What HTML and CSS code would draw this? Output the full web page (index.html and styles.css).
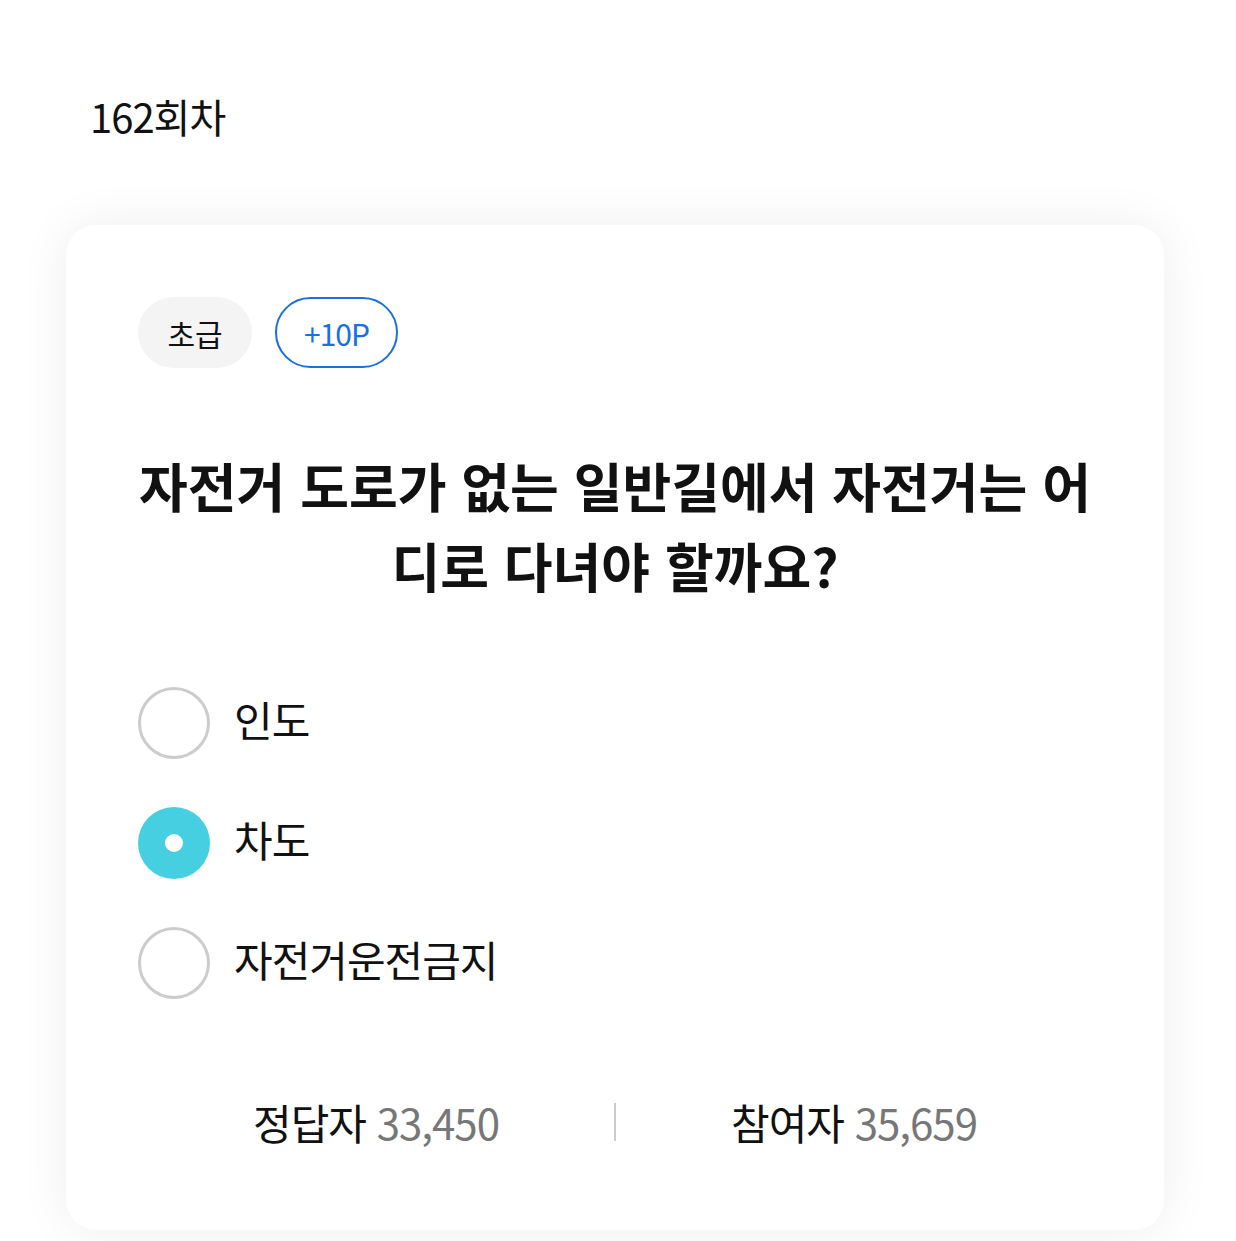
FILE: index.html
```html
<!DOCTYPE html>
<html lang="ko">

<head>
    <meta charset="utf-8">
    <title>퀴즈</title>
    <link rel="stylesheet" href="styles.css">
</head>

<body>
    <div class="page">
        <h2 class="round">162회차</h2>

        <div class="quiz-card">
            <div class="tags">
                <span class="tag tag-level">초급</span>
                <span class="tag tag-point">+10P</span>
            </div>

            <h1 class="question">자전거 도로가 없는 일반길에서 자전거는 어디로 다녀야 할까요?</h1>

            <ul class="options">
                <li class="option">
                    <span class="radio"></span>
                    <span class="option-text">인도</span>
                </li>
                <li class="option selected">
                    <span class="radio"></span>
                    <span class="option-text">차도</span>
                </li>
                <li class="option">
                    <span class="radio"></span>
                    <span class="option-text">자전거운전금지</span>
                </li>
            </ul>

            <div class="stats">
                <div class="stat">정답자 <span class="num">33,450</span></div>
                <div class="divider"></div>
                <div class="stat">참여자 <span class="num">35,659</span></div>
            </div>
        </div>
    </div>
</body>

</html>
```

FILE: styles.css
```css
body {
    margin: 0;
    background-color: #ffffff;
    font-family: "Noto Sans CJK KR", "Noto Sans", sans-serif;
    color: #111;
}

.page {
    padding: 86px 66px 11px 66px;
}

.round {
    margin: 0 0 0 24px;
    font-size: 40px;
    font-weight: 400;
    line-height: 60px;
    letter-spacing: -1px;
}

.quiz-card {
    margin-top: 79px;
    width: 1098px;
    height: 1005px;
    box-sizing: border-box;
    background-color: #fff;
    border-radius: 30px;
    box-shadow: 0 0 50px rgba(0, 0, 0, 0.07);
    padding: 72px 72px 0 72px;
}

.tags {
    display: flex;
    gap: 23px;
}

.tag {
    display: flex;
    align-items: center;
    justify-content: center;
    height: 71px;
    box-sizing: border-box;
    border-radius: 36px;
    font-size: 30px;
}

.tag-level {
    width: 114px;
    background-color: #f4f4f4;
    color: #111;
}

.tag-point {
    width: 123px;
    border: 2px solid #1a6fe3;
    color: #1a6fe3;
    letter-spacing: -1px;
}

.question {
    margin: 77px 0 0 0;
    font-size: 53px;
    font-weight: 700;
    line-height: 80px;
    text-align: center;
    letter-spacing: 0;
}

.options {
    list-style: none;
    margin: 82px 0 0 0;
    padding: 0;
    display: flex;
    flex-direction: column;
    gap: 48px;
}

.option {
    display: flex;
    align-items: center;
    gap: 24px;
    height: 72px;
}

.radio {
    width: 72px;
    height: 72px;
    box-sizing: border-box;
    border-radius: 50%;
    border: 3px solid #cccccc;
    display: flex;
    align-items: center;
    justify-content: center;
}

.selected .radio {
    border: none;
    background-color: #45cfe0;
}

.selected .radio::after {
    content: "";
    width: 18px;
    height: 18px;
    border-radius: 50%;
    background-color: #fff;
}

.option-text {
    font-size: 42px;
    letter-spacing: -1px;
    margin-bottom: 10px;
}

.stats {
    margin-top: 92px;
    display: flex;
    align-items: center;
}

.stat {
    flex: 1;
    text-align: center;
    font-size: 42px;
    letter-spacing: -1px;
}

.num {
    color: #777;
}

.divider {
    width: 2px;
    height: 38px;
    background-color: #cccccc;
}
```
